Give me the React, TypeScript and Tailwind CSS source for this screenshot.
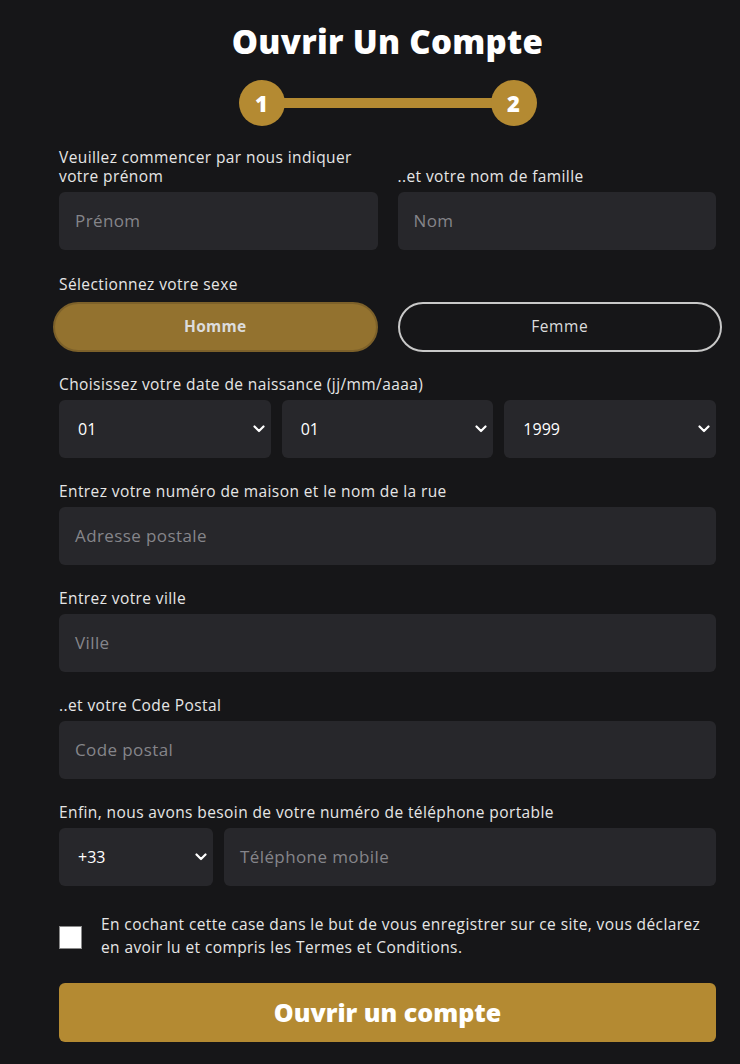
import React from "react";

function Chevron() {
  return (
    <svg width="12" height="8" viewBox="0 0 12 8" className="shrink-0">
      <path d="M1.5 1.5 L6 6 L10.5 1.5" fill="none" stroke="#ffffff" strokeWidth="2.2" strokeLinecap="round" strokeLinejoin="round" />
    </svg>
  );
}

function Field({ placeholder, className = "" }: { placeholder: string; className?: string }) {
  return (
    <div className={`h-[58px] rounded-md bg-[#27272b] flex items-center px-4 text-[17px] tracking-[0.4px] text-[#85858a] ${className}`}>
      {placeholder}
    </div>
  );
}

function Select({ value, className = "" }: { value: string; className?: string }) {
  return (
    <div className={`h-[58px] rounded-md bg-[#27272b] flex items-center justify-between pl-[19px] pr-[6px] text-[16px] text-white ${className}`}>
      <span>{value}</span>
      <Chevron />
    </div>
  );
}

function Label({ children }: { children: React.ReactNode }) {
  return <div className="text-[15.5px] leading-[19px] text-[#e6e6e6] mb-[6px] tracking-[0.4px]">{children}</div>;
}

export default function App() {
  return (
    <div className="min-h-[1064px] bg-[#161618] text-white" style={{ fontFamily: "'Open Sans', sans-serif" }}>
      <div className="w-[657px] ml-[59px] pt-[21px]">
        <h1 className="text-center text-[33px] leading-[42px] font-extrabold tracking-[0.3px]">
          Ouvrir Un Compte
        </h1>

        <div className="flex justify-center mt-[17px]">
          <div className="flex items-center w-[298px]">
            <div className="w-[46px] h-[46px] rounded-full bg-[#b48a32] flex items-center justify-center text-[22px] font-extrabold">1</div>
            <div className="flex-1 h-[10px] bg-[#b48a32] -mx-[2px]" />
            <div className="w-[46px] h-[46px] rounded-full bg-[#b48a32] flex items-center justify-center text-[22px] font-extrabold">2</div>
          </div>
        </div>

        <div className="grid grid-cols-2 gap-[20px] mt-[22px]">
          <div className="flex flex-col justify-end">
            <Label>
              <span className="block">Veuillez commencer par nous indiquer</span>
              <span className="block">votre prénom</span>
            </Label>
            <Field placeholder="Prénom" />
          </div>
          <div className="flex flex-col justify-end">
            <Label>..et votre nom de famille</Label>
            <Field placeholder="Nom" />
          </div>
        </div>

        <div className="mt-[25px]">
          <Label>Sélectionnez votre sexe</Label>
          <div className="grid grid-cols-2 gap-[20px] -mx-[6px] mt-[8px]">
            <div className="h-[50px] rounded-full bg-[#93722f] border-2 border-[#7d612a] flex items-center justify-center text-[15.5px] tracking-[0.3px] font-bold text-[#dcdcdc]">
              Homme
            </div>
            <div className="h-[50px] rounded-full border-2 border-[#c8c8c8] flex items-center justify-center text-[15.5px] tracking-[0.6px] text-[#dcdcdc]">
              Femme
            </div>
          </div>
        </div>

        <div className="mt-[23px]">
          <Label>Choisissez votre date de naissance (jj/mm/aaaa)</Label>
          <div className="grid grid-cols-3 gap-[11px]">
            <Select value="01" />
            <Select value="01" />
            <Select value="1999" />
          </div>
        </div>

        <div className="mt-[24px]">
          <Label>Entrez votre numéro de maison et le nom de la rue</Label>
          <Field placeholder="Adresse postale" />
        </div>

        <div className="mt-[24px]">
          <Label>Entrez votre ville</Label>
          <Field placeholder="Ville" />
        </div>

        <div className="mt-[24px]">
          <Label>..et votre Code Postal</Label>
          <Field placeholder="Code postal" />
        </div>

        <div className="mt-[24px]">
          <Label>Enfin, nous avons besoin de votre numéro de téléphone portable</Label>
          <div className="flex gap-[11px]">
            <Select value="+33" className="w-[154px] pl-[18px]" />
            <Field placeholder="Téléphone mobile" className="flex-1" />
          </div>
        </div>

        <div className="flex items-start gap-[19px] mt-[27px]">
          <div className="w-[23px] h-[23px] mt-[13px] bg-white border border-[#8a8a8a] shrink-0" />
          <div className="text-[15.5px] leading-[23px] text-[#e6e6e6] tracking-[0.4px]">
            En cochant cette case dans le but de vous enregistrer sur ce site, vous déclarez
            <br />
            en avoir lu et compris les Termes et Conditions.
          </div>
        </div>

        <div className="mt-[24px] h-[59px] rounded-md bg-[#b48a32] flex items-center justify-center text-[25px] font-extrabold">
          Ouvrir un compte
        </div>
      </div>
    </div>
  );
}
